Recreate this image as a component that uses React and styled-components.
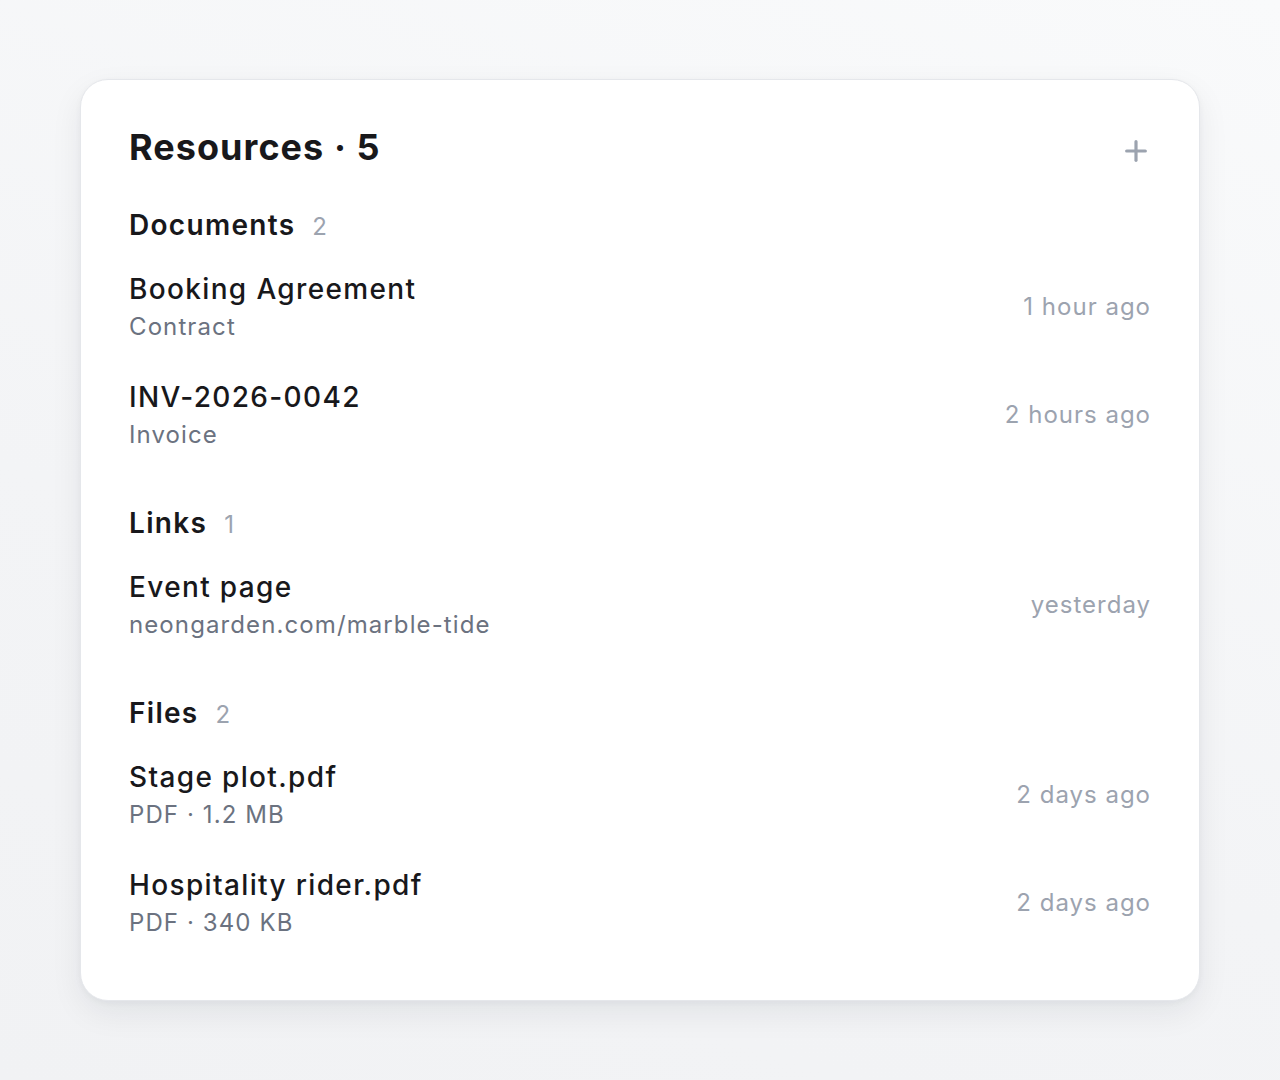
import React from 'react'
import styled, { createGlobalStyle } from 'styled-components'
import { Plus } from 'lucide-react'

const GlobalStyle = createGlobalStyle`
  html, body {
    margin: 0;
    padding: 0;
  }
  body {
    min-height: 1080px;
    background: linear-gradient(200deg, #f9fafb 0%, #f3f4f6 60%, #f1f2f4 100%);
    font-family: Inter, "Noto Sans", sans-serif;
    -webkit-font-smoothing: antialiased;
  }
`

const sections = [
  {
    name: 'Documents',
    items: [
      { title: 'Booking Agreement', sub: 'Contract', time: '1 hour ago' },
      { title: 'INV-2026-0042', sub: 'Invoice', time: '2 hours ago' }
    ]
  },
  {
    name: 'Links',
    items: [
      { title: 'Event page', sub: 'neongarden.com/marble-tide', time: 'yesterday' }
    ]
  },
  {
    name: 'Files',
    items: [
      { title: 'Stage plot.pdf', sub: 'PDF · 1.2 MB', time: '2 days ago' },
      { title: 'Hospitality rider.pdf', sub: 'PDF · 340 KB', time: '2 days ago' }
    ]
  }
]

const App = () => {
  const total = sections.reduce((acc, s) => acc + s.items.length, 0)

  return (
    <>
      <GlobalStyle />
      <Page>
        <Card>
          <Header>
            <Title>Resources · {total}</Title>
            <AddButton aria-label="Add resource">
              <Plus size={32} strokeWidth={2.4} />
            </AddButton>
          </Header>
          {sections.map((section) => (
            <Section key={section.name}>
              <SectionHeading>
                {section.name}
                <Count>{section.items.length}</Count>
              </SectionHeading>
              <List>
                {section.items.map((item) => (
                  <Row key={item.title}>
                    <Info>
                      <ItemTitle>{item.title}</ItemTitle>
                      <ItemSub>{item.sub}</ItemSub>
                    </Info>
                    <Time>{item.time}</Time>
                  </Row>
                ))}
              </List>
            </Section>
          ))}
        </Card>
      </Page>
    </>
  )
}

export default App

const Page = styled.div`
  display: flex;
  justify-content: center;
  padding-top: 79px;
`

const Card = styled.div`
  width: 1120px;
  box-sizing: border-box;
  background: #ffffff;
  border: 1px solid #e5e7eb;
  border-radius: 28px;
  padding: 47px 48px 43px;
  box-shadow: 0 12px 32px rgba(17, 24, 39, 0.07), 0 2px 6px rgba(17, 24, 39, 0.04);
  display: flex;
  flex-direction: column;
  gap: 36px;
`

const Header = styled.div`
  display: flex;
  justify-content: space-between;
  align-items: flex-start;
  margin-bottom: 4px;
`

const Title = styled.h1`
  margin: 0;
  font-size: 36px;
  line-height: 40px;
  font-weight: 700;
  letter-spacing: 1.05px;
  color: #18181b;
`

const AddButton = styled.button`
  display: flex;
  align-items: center;
  justify-content: center;
  width: 32px;
  height: 32px;
  margin-top: 8px;
  margin-right: -1px;
  padding: 0;
  border: none;
  background: none;
  color: #9ca3af;
  cursor: pointer;
`

const Section = styled.section`
  display: flex;
  flex-direction: column;
  gap: 8px;
`

const SectionHeading = styled.h2`
  margin: 0;
  display: flex;
  align-items: baseline;
  gap: 17px;
  font-size: 28px;
  line-height: 36px;
  font-weight: 600;
  letter-spacing: 1.3px;
  color: #18181b;
`

const Count = styled.span`
  font-size: 24px;
  font-weight: 400;
  letter-spacing: 1px;
  color: #9ca3af;
`

const List = styled.div`
  display: flex;
  flex-direction: column;
`

const Row = styled.div`
  display: flex;
  align-items: center;
  justify-content: space-between;
  padding: 18px 0;
`

const Info = styled.div`
  display: flex;
  flex-direction: column;
  gap: 4px;
`

const ItemTitle = styled.div`
  font-size: 28px;
  line-height: 36px;
  font-weight: 500;
  letter-spacing: 1.35px;
  color: #18181b;
`

const ItemSub = styled.div`
  font-size: 24px;
  line-height: 32px;
  letter-spacing: 1.1px;
  color: #6b7280;
`

const Time = styled.div`
  font-size: 24px;
  line-height: 32px;
  letter-spacing: 1px;
  color: #9ca3af;
`
